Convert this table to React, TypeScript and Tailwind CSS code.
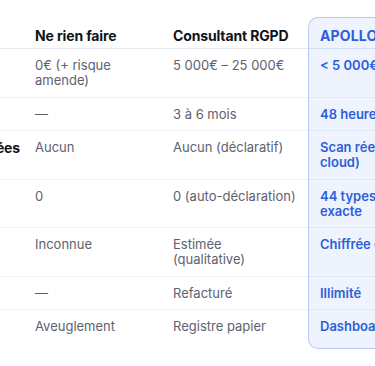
import { Fragment } from 'react';

interface Row {
  label: string;
  nothing: string[];
  consultant: string[];
  apollo: string[];
}

const rows: Row[] = [
  { label: 'Coût estimé', nothing: ['0€ (+ risque', 'amende)'], consultant: ['5\u00a0000€ – 25\u00a0000€'], apollo: ['< 5\u00a0000€'] },
  { label: 'Délai de mise en place', nothing: ['—'], consultant: ['3 à 6 mois'], apollo: ['48 heures'] },
  { label: 'Données personnelles détectées', nothing: ['Aucun'], consultant: ['Aucun (déclaratif)'], apollo: ['Scan réel (fichiers +', 'cloud)'] },
  { label: 'Types de données', nothing: ['0'], consultant: ['0 (auto-déclaration)'], apollo: ['44 types, détection', 'exacte'] },
  { label: 'Exposition financière', nothing: ['Inconnue'], consultant: ['Estimée', '(qualitative)'], apollo: ['Chiffrée en euros'] },
  { label: 'Mises à jour', nothing: ['—'], consultant: ['Refacturé'], apollo: ['Illimité'] },
  { label: 'Suivi des risques', nothing: ['Aveuglement'], consultant: ['Registre papier'], apollo: ['Dashboard temps réel'] },
];

function Lines({ lines }: { lines: string[] }) {
  return (
    <>
      {lines.map((l) => (
        <span key={l} className="block whitespace-nowrap">
          {l}
        </span>
      ))}
    </>
  );
}

export default function App() {
  return (
    <div className="h-[366px] w-[375px] overflow-hidden bg-white pt-[17px] font-[Inter,sans-serif]">
      <div className="flex w-[478px] justify-end">
        <div className="grid shrink-0 grid-cols-[max-content_138px_147px_170px]">
          {/* header */}
          <div className="border-b border-[#e6e8ee] pb-[2px] pt-[9px]" />
          <div className="border-b border-[#e6e8ee] px-3 pb-[2px] pt-[9px] text-[14px] font-bold leading-[20px] tracking-[-0.01em] text-[#10131a]">
            Ne rien faire
          </div>
          <div className="border-b border-[#e6e8ee] px-3 pb-[2px] pt-[9px] text-[14px] font-bold leading-[20px] tracking-[-0.01em] text-[#10131a]">
            Consultant RGPD
          </div>
          <div className="rounded-t-[10px] border-x border-b border-t border-x-[#b7c9f3] border-t-[#b7c9f3] border-b-[#d3def8] bg-[#eef3fe] px-[11px] pb-[2px] pt-[8px] text-[14px] font-bold leading-[20px] tracking-[0.01em] text-[#2d5fd8]">
            APOLLO
          </div>

          {rows.map((r, i) => {
            const last = i === rows.length - 1;
            const cell = last ? '' : 'border-b border-[#f0f1f4]';
            return (
              <Fragment key={r.label}>
                <div className={`${cell} whitespace-nowrap pb-[8.5px] pl-3 pr-[3px] pt-[9px] text-[14px] font-bold leading-[15px] tracking-[-0.01em] text-[#10131a]`}>
                  {r.label}
                </div>
                <div className={`${cell} px-3 pb-[8.5px] pt-[9px] text-[13px] leading-[15px] text-[#5d6270]`}>
                  <Lines lines={r.nothing} />
                </div>
                <div className={`${cell} px-3 pb-[8.5px] pt-[9px] text-[13px] leading-[15px] text-[#5d6270]`}>
                  <Lines lines={r.consultant} />
                </div>
                <div
                  className={`border-x border-[#b7c9f3] bg-[#eef3fe] px-[11px] pt-[9px] text-[13px] font-semibold leading-[15px] text-[#2d5fd8] ${
                    last ? 'rounded-b-[10px] border-b pb-[14px]' : 'border-b border-b-[#dfe7fb] pb-[8.5px]'
                  }`}
                >
                  <Lines lines={r.apollo} />
                </div>
              </Fragment>
            );
          })}
        </div>
      </div>
    </div>
  );
}
